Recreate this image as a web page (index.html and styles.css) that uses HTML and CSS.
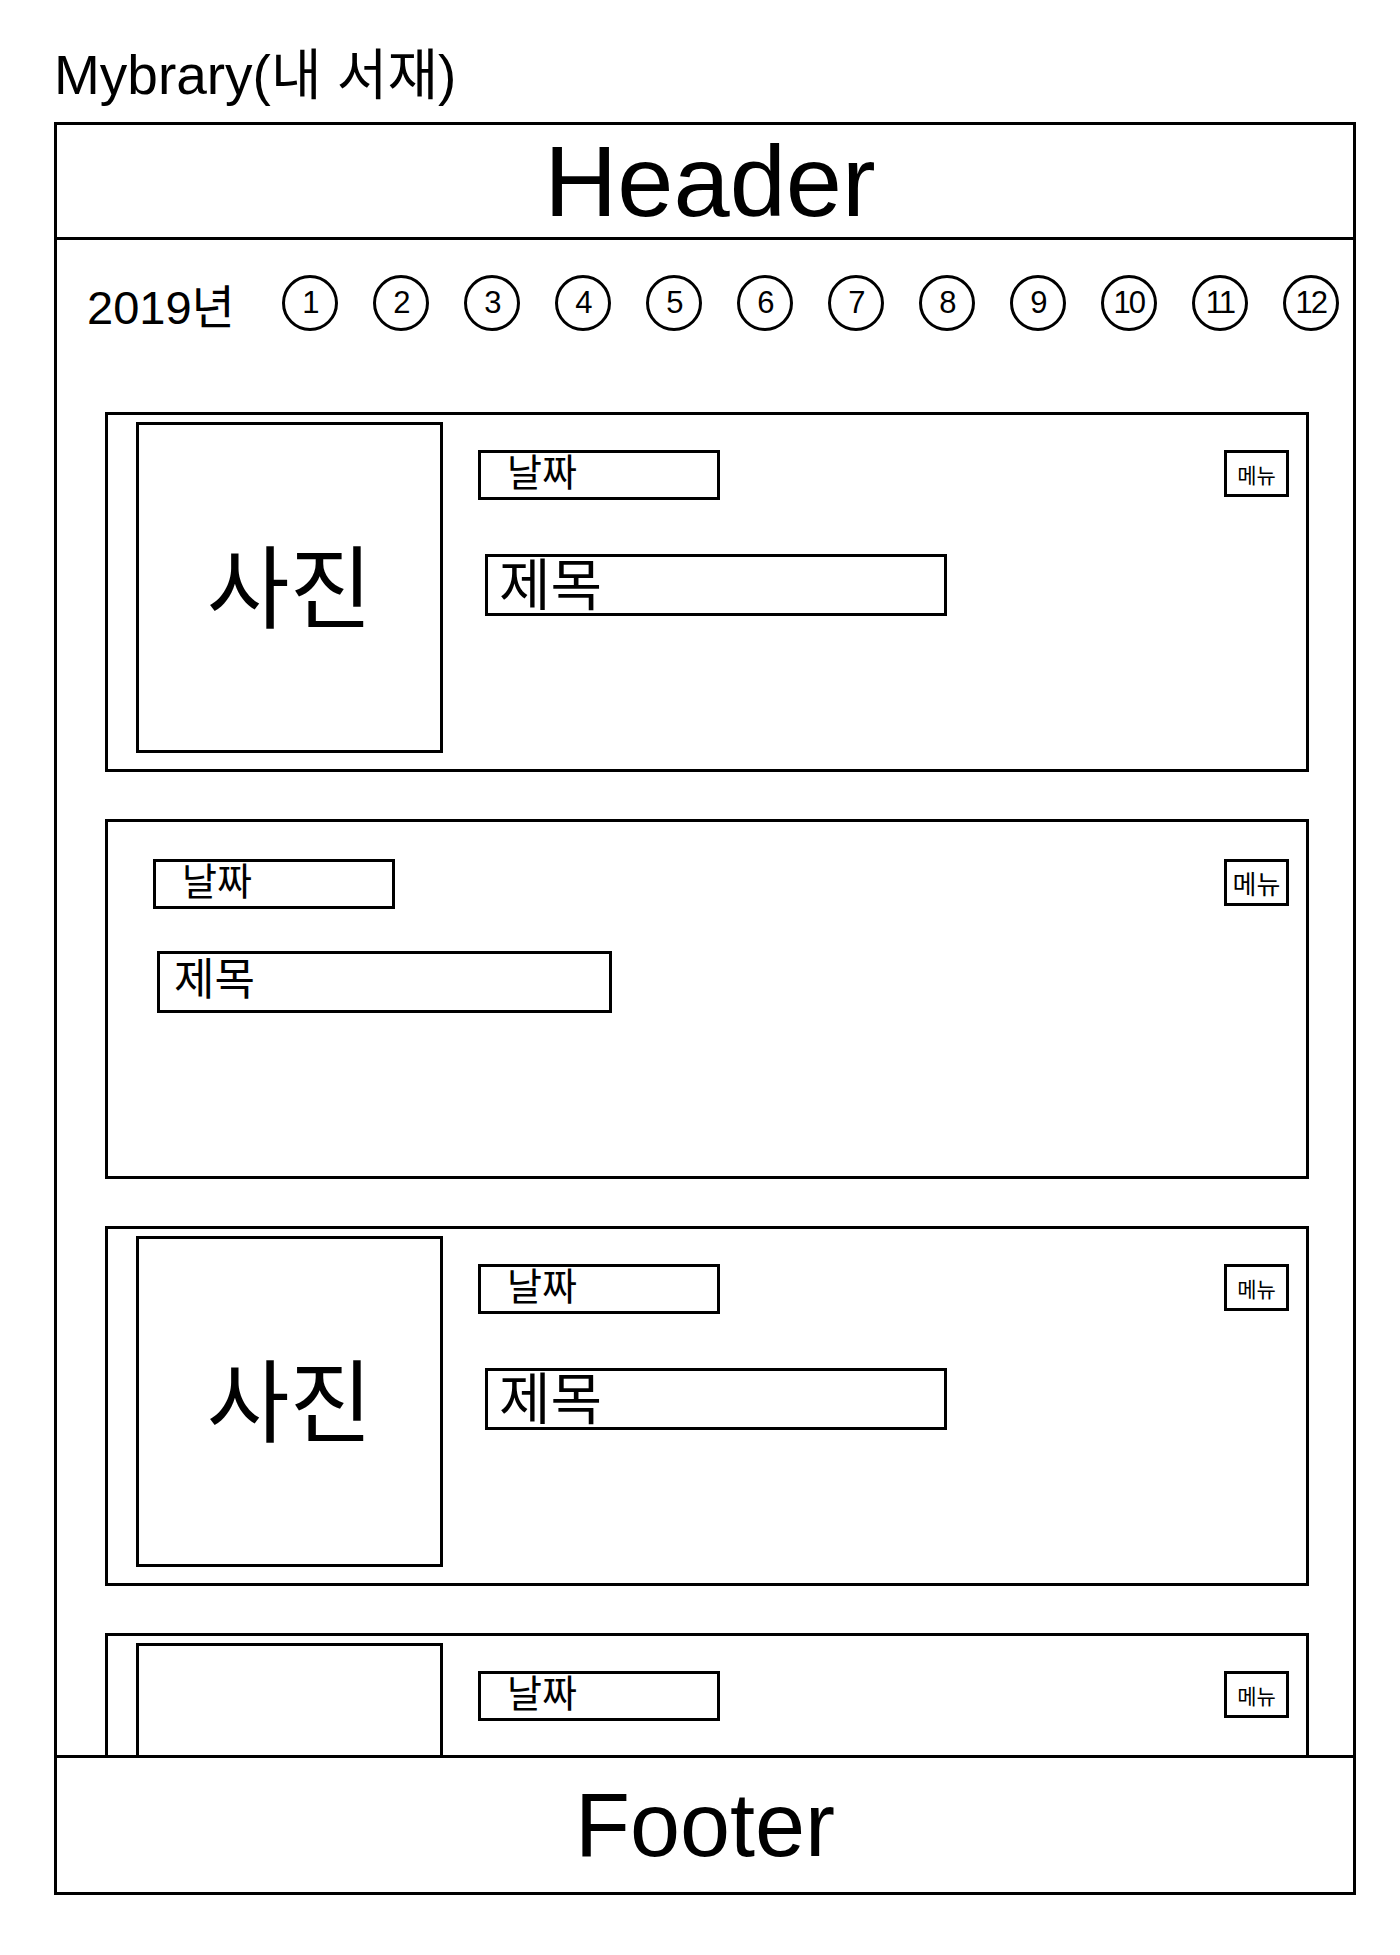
FILE: index.html
```html
<!DOCTYPE html>
<html>
<head>
  <meta charset="utf-8">
  <title>Mybrary(내 서재)</title>
  <link rel="stylesheet" href="styles.css">
</head>
<body>
  <div class="page">
    <h1 class="title">Mybrary(내 서재)</h1>

    <div class="frame">
      <div class="header">Header</div>

      <div class="main">
        <div class="months">
          <span class="year">2019년</span>
          <span class="month">1</span>
          <span class="month">2</span>
          <span class="month">3</span>
          <span class="month">4</span>
          <span class="month">5</span>
          <span class="month">6</span>
          <span class="month">7</span>
          <span class="month">8</span>
          <span class="month">9</span>
          <span class="month">10</span>
          <span class="month">11</span>
          <span class="month">12</span>
        </div>

        <div class="list">
          <div class="card">
            <div class="photo">사진</div>
            <div class="body">
              <div class="top">
                <div class="date">날짜</div>
                <div class="menu">메뉴</div>
              </div>
              <div class="subject">제목</div>
            </div>
          </div>

          <div class="card">
            <div class="body nophoto">
              <div class="top">
                <div class="date">날짜</div>
                <div class="menu big">메뉴</div>
              </div>
              <div class="subject">제목</div>
            </div>
          </div>

          <div class="card">
            <div class="photo">사진</div>
            <div class="body">
              <div class="top">
                <div class="date">날짜</div>
                <div class="menu">메뉴</div>
              </div>
              <div class="subject">제목</div>
            </div>
          </div>

          <div class="card">
            <div class="photo"></div>
            <div class="body">
              <div class="top">
                <div class="date">날짜</div>
                <div class="menu">메뉴</div>
              </div>
            </div>
          </div>
        </div>
      </div>

      <div class="footer">Footer</div>
    </div>
  </div>
</body>
</html>
```

FILE: styles.css
```css
body {
  margin: 0;
  padding: 0;
  background-color: #fff;
  color: #000;
  font-family: "Liberation Sans", "Noto Sans CJK KR", sans-serif;
}

.page {
  padding: 44px 0 0 54px;
}

.title {
  margin: 0 0 16px;
  font-size: 55px;
  font-weight: normal;
  line-height: 62px;
}

.frame {
  width: 1302px;
  height: 1773px;
  box-sizing: border-box;
  border: 3px solid #000;
  display: flex;
  flex-direction: column;
}

.header {
  height: 112px;
  flex-shrink: 0;
  border-bottom: 3px solid #000;
  padding-left: 10px;
  display: flex;
  justify-content: center;
  align-items: center;
  font-size: 101px;
}

.main {
  flex: 1;
  overflow: hidden;
  padding-top: 35px;
}

.months {
  display: flex;
  align-items: center;
  gap: 35px;
  height: 56px;
  padding-left: 30px;
}

.year {
  font-size: 47px;
  white-space: nowrap;
  flex-shrink: 0;
  margin-right: 12px;
}

.month {
  width: 56px;
  height: 56px;
  flex-shrink: 0;
  box-sizing: border-box;
  border: 3px solid #000;
  border-radius: 50%;
  display: flex;
  justify-content: center;
  align-items: center;
  font-size: 31px;
  letter-spacing: -2px;
}

.list {
  margin-top: 81px;
  padding: 0 44px 0 48px;
  display: flex;
  flex-direction: column;
  gap: 47px;
}

.card {
  height: 360px;
  flex-shrink: 0;
  box-sizing: border-box;
  border: 3px solid #000;
  padding: 7px 17px 16px 28px;
  display: flex;
}

.photo {
  width: 307px;
  height: 331px;
  flex-shrink: 0;
  box-sizing: border-box;
  border: 3px solid #000;
  display: flex;
  justify-content: center;
  align-items: center;
  font-size: 90px;
  padding-bottom: 12px;
}

.body {
  flex: 1;
  padding: 28px 0 0 35px;
}

.body.nophoto {
  padding: 30px 0 0 17px;
}

.top {
  display: flex;
  justify-content: space-between;
  align-items: flex-start;
}

.date {
  width: 242px;
  height: 50px;
  box-sizing: border-box;
  border: 3px solid #000;
  padding-left: 26px;
  font-size: 38px;
  line-height: 40px;
}

.menu {
  width: 65px;
  height: 47px;
  box-sizing: border-box;
  border: 3px solid #000;
  display: flex;
  justify-content: center;
  align-items: center;
  font-size: 21px;
}

.menu.big {
  font-size: 26px;
}

.subject {
  width: 462px;
  height: 62px;
  margin: 54px 0 0 7px;
  box-sizing: border-box;
  border: 3px solid #000;
  padding-left: 11px;
  font-size: 56px;
  line-height: 58px;
}

.nophoto .subject {
  width: 455px;
  margin: 42px 0 0 4px;
  font-size: 44px;
  line-height: 52px;
  padding-left: 14px;
}

.footer {
  height: 134px;
  flex-shrink: 0;
  border-top: 3px solid #000;
  display: flex;
  justify-content: center;
  align-items: center;
  font-size: 90px;
}
```
